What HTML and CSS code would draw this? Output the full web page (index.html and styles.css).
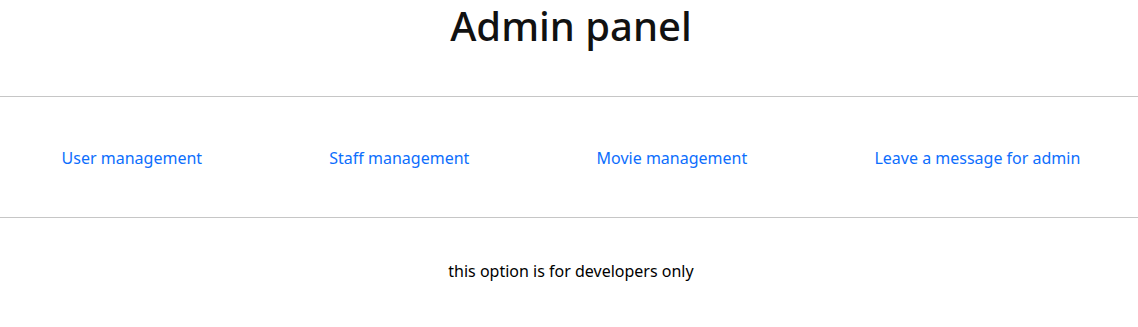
FILE: index.html
```html
<!DOCTYPE html>
<html lang="en">
<head>
  <meta charset="UTF-8" />
  <meta name="viewport" content="width=device-width, initial-scale=1.0" />
  <title>Admin panel</title>
  <link rel="stylesheet" href="styles.css">
</head>
<body>
  <div class="page">
    <h1 class="title">Admin panel</h1>
    <hr class="divider">
    <nav class="admin-nav">
      <a href="#" class="nav-link">User management</a>
      <a href="#" class="nav-link">Staff management</a>
      <a href="#" class="nav-link">Movie management</a>
      <a href="#" class="nav-link">Leave a message for admin</a>
    </nav>
    <hr class="divider">
    <p class="note">this option is for developers only</p>
  </div>
</body>
</html>
```

FILE: styles.css
```css
body {
  margin: 0;
  font-family: 'Noto Sans', sans-serif;
  font-size: 16px;
  line-height: 1.5;
  color: #212529;
  background: #fff;
  overflow-x: hidden;
}
.page {
  margin: 0 -6px 0 -2px;
}
.title {
  margin: 2px 0 0;
  font-size: 40px;
  font-weight: 500;
  line-height: 1.2;
  text-align: center;
  color: #111;
}
.divider {
  margin: 46px 0 0;
  border: 0;
  border-top: 1px solid #c6c6c6;
}
.admin-nav {
  display: flex;
  justify-content: space-around;
  padding: 49px 0 47px;
}
.nav-link {
  color: #0d6efd;
  text-decoration: none;
}
.admin-nav + .divider {
  margin-top: 0;
}
.note {
  margin: 41px 0 0;
  text-align: center;
  color: #000;
}
```
